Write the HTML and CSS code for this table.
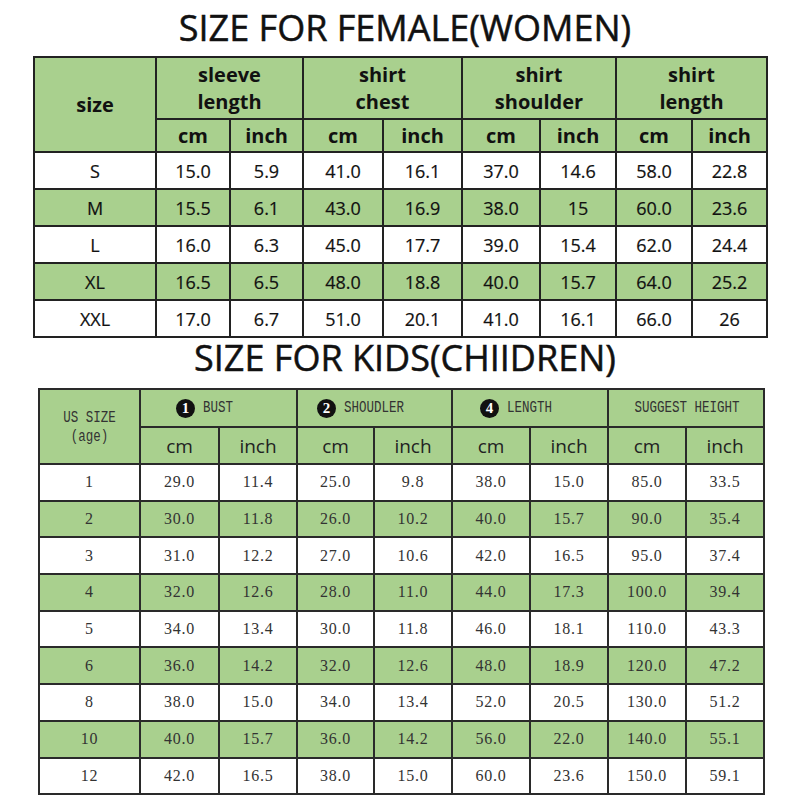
FILE: index.html
```html
<!DOCTYPE html>
<html lang="en">
<head>
<meta charset="utf-8">
<title>Size Chart</title>
<link rel="stylesheet" href="styles.css">
</head>
<body>
<h1 class="title title-women">SIZE FOR FEMALE(WOMEN)</h1>
<div class="chart women">
  <div class="c hd rs2">size</div>
  <div class="c hd cs2">sleeve<br>length</div>
  <div class="c hd cs2">shirt<br>chest</div>
  <div class="c hd cs2">shirt<br>shoulder</div>
  <div class="c hd cs2">shirt<br>length</div>
  <div class="c hd">cm</div><div class="c hd">inch</div>
  <div class="c hd">cm</div><div class="c hd">inch</div>
  <div class="c hd">cm</div><div class="c hd">inch</div>
  <div class="c hd">cm</div><div class="c hd">inch</div>

  <div class="row"><div class="c">S</div><div class="c">15.0</div><div class="c">5.9</div><div class="c">41.0</div><div class="c">16.1</div><div class="c">37.0</div><div class="c">14.6</div><div class="c">58.0</div><div class="c">22.8</div></div>
  <div class="row g"><div class="c">M</div><div class="c">15.5</div><div class="c">6.1</div><div class="c">43.0</div><div class="c">16.9</div><div class="c">38.0</div><div class="c">15</div><div class="c">60.0</div><div class="c">23.6</div></div>
  <div class="row"><div class="c">L</div><div class="c">16.0</div><div class="c">6.3</div><div class="c">45.0</div><div class="c">17.7</div><div class="c">39.0</div><div class="c">15.4</div><div class="c">62.0</div><div class="c">24.4</div></div>
  <div class="row g"><div class="c">XL</div><div class="c">16.5</div><div class="c">6.5</div><div class="c">48.0</div><div class="c">18.8</div><div class="c">40.0</div><div class="c">15.7</div><div class="c">64.0</div><div class="c">25.2</div></div>
  <div class="row"><div class="c">XXL</div><div class="c">17.0</div><div class="c">6.7</div><div class="c">51.0</div><div class="c">20.1</div><div class="c">41.0</div><div class="c">16.1</div><div class="c">66.0</div><div class="c">26</div></div>
</div>

<h1 class="title title-kids">SIZE FOR KIDS(CHIIDREN)</h1>
<div class="chart kids">
  <div class="c hd rs2"><span class="label two">US SIZE<br>(age)</span></div>
  <div class="c hd cs2 group"><span class="num">1</span><span class="label">BUST</span></div>
  <div class="c hd cs2 group"><span class="num">2</span><span class="label">SHOUDLER</span></div>
  <div class="c hd cs2 group"><span class="num">4</span><span class="label">LENGTH</span></div>
  <div class="c hd cs2 group plain"><span class="label">SUGGEST HEIGHT</span></div>
  <div class="c hd unit">cm</div><div class="c hd unit">inch</div>
  <div class="c hd unit">cm</div><div class="c hd unit">inch</div>
  <div class="c hd unit">cm</div><div class="c hd unit">inch</div>
  <div class="c hd unit">cm</div><div class="c hd unit">inch</div>

  <div class="row"><div class="c">1</div><div class="c">29.0</div><div class="c">11.4</div><div class="c">25.0</div><div class="c">9.8</div><div class="c">38.0</div><div class="c">15.0</div><div class="c">85.0</div><div class="c">33.5</div></div>
  <div class="row g"><div class="c">2</div><div class="c">30.0</div><div class="c">11.8</div><div class="c">26.0</div><div class="c">10.2</div><div class="c">40.0</div><div class="c">15.7</div><div class="c">90.0</div><div class="c">35.4</div></div>
  <div class="row"><div class="c">3</div><div class="c">31.0</div><div class="c">12.2</div><div class="c">27.0</div><div class="c">10.6</div><div class="c">42.0</div><div class="c">16.5</div><div class="c">95.0</div><div class="c">37.4</div></div>
  <div class="row g"><div class="c">4</div><div class="c">32.0</div><div class="c">12.6</div><div class="c">28.0</div><div class="c">11.0</div><div class="c">44.0</div><div class="c">17.3</div><div class="c">100.0</div><div class="c">39.4</div></div>
  <div class="row"><div class="c">5</div><div class="c">34.0</div><div class="c">13.4</div><div class="c">30.0</div><div class="c">11.8</div><div class="c">46.0</div><div class="c">18.1</div><div class="c">110.0</div><div class="c">43.3</div></div>
  <div class="row g"><div class="c">6</div><div class="c">36.0</div><div class="c">14.2</div><div class="c">32.0</div><div class="c">12.6</div><div class="c">48.0</div><div class="c">18.9</div><div class="c">120.0</div><div class="c">47.2</div></div>
  <div class="row"><div class="c">8</div><div class="c">38.0</div><div class="c">15.0</div><div class="c">34.0</div><div class="c">13.4</div><div class="c">52.0</div><div class="c">20.5</div><div class="c">130.0</div><div class="c">51.2</div></div>
  <div class="row g"><div class="c">10</div><div class="c">40.0</div><div class="c">15.7</div><div class="c">36.0</div><div class="c">14.2</div><div class="c">56.0</div><div class="c">22.0</div><div class="c">140.0</div><div class="c">55.1</div></div>
  <div class="row"><div class="c">12</div><div class="c">42.0</div><div class="c">16.5</div><div class="c">38.0</div><div class="c">15.0</div><div class="c">60.0</div><div class="c">23.6</div><div class="c">150.0</div><div class="c">59.1</div></div>
</div>
</body>
</html>
```

FILE: styles.css
```css
* { box-sizing: border-box; }

html, body {
  margin: 0;
  padding: 0;
  background: #ffffff;
}

body {
  width: 800px;
  height: 800px;
  overflow: hidden;
  font-family: "Open Sans", "Liberation Sans", sans-serif;
  color: #111;
}

.title {
  margin: 0;
  padding-left: 10px;
  text-align: center;
  font-family: "Open Sans", "Liberation Sans", sans-serif;
  font-weight: 400;
  font-size: 36px;
  color: #111;
  letter-spacing: 0;
  -webkit-text-stroke: 0.5px #111;
}

.title-women {
  line-height: 56px;
}

.title-kids {
  line-height: 39px;
  margin-bottom: 11px;
}

.chart {
  display: grid;
  gap: 2px;
  padding: 2px;
  background: #222;
}

.women {
  margin-left: 33px;
  width: 735px;
  grid-template-columns: 120px 72px 71px 78px 77px 76px 74px 74px 73px;
  grid-template-rows: 60px 31px repeat(5, 35px);
}

.kids {
  margin-left: 38px;
  width: 727px;
  grid-template-columns: 99px 77px 76px 75px 76px 76px 76px 76px 76px;
  grid-template-rows: 36px 35px repeat(9, 34.7px);
  background: #2a2a2a;
}

.row { display: contents; }

.c {
  background: #ffffff;
  display: flex;
  align-items: center;
  justify-content: center;
  text-align: center;
}

.hd, .row.g > .c {
  background: #a9d08e;
}

.rs2 { grid-row: span 2; }
.cs2 { grid-column: span 2; }

/* women table text */
.women .c {
  font-size: 18px;
  color: #111;
  -webkit-text-stroke: 0.2px #111;
}

.women .hd {
  font-weight: 700;
  font-size: 20px;
  line-height: 27px;
  -webkit-text-stroke: 0;
}

/* kids table text */
.kids .c {
  font-family: "Liberation Serif", serif;
  font-size: 16px;
  letter-spacing: 0.8px;
  color: #333;
}

.kids .label {
  display: inline-block;
  font-family: "Liberation Mono", monospace;
  font-size: 12.5px;
  letter-spacing: 0;
  line-height: 15px;
  color: #333;
  transform: scaleY(1.3);
}

.kids .label.two {
  margin-top: 2px;
}

.kids .group {
  justify-content: center;
  padding-right: 28px;
  gap: 8px;
}

.kids .group.plain {
  padding-right: 0;
  padding-left: 2px;
}

.kids .unit {
  font-family: "Open Sans", "Liberation Sans", sans-serif;
  font-size: 19px;
  letter-spacing: 0;
  color: #222;
}

.num {
  width: 19px;
  height: 19px;
  border-radius: 50%;
  background: #111;
  color: #fff;
  font-family: "Liberation Serif", serif;
  font-weight: 700;
  font-size: 15px;
  letter-spacing: 0;
  line-height: 19px;
  text-align: center;
}
```
